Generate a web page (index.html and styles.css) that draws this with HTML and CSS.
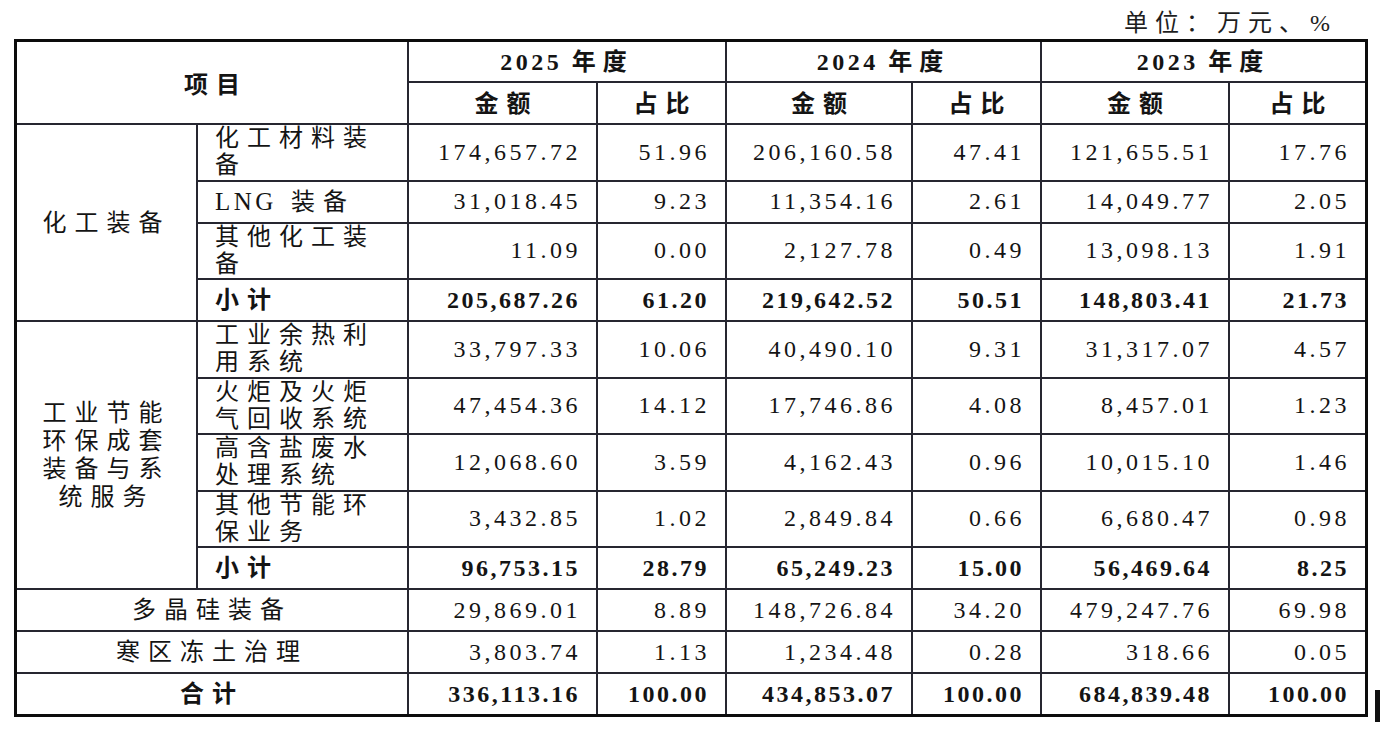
FILE: index.html
```html
<!DOCTYPE html>
<html lang="zh-CN">
<head>
<meta charset="utf-8">
<title>营业收入构成</title>
<link rel="stylesheet" href="styles.css">
</head>
<body>
<div class="page">
  <div class="unit">单位：万元、%</div>
  <table class="tbl">
    <colgroup>
      <col class="w-cat"><col class="w-sub">
      <col class="w-amt1"><col class="w-pct">
      <col class="w-amt2"><col class="w-pct">
      <col class="w-amt3"><col class="w-pct3">
    </colgroup>
    <thead>
      <tr class="h1">
        <th colspan="2" rowspan="2" class="hd">项目</th>
        <th colspan="2" class="yr">2025 <span class="cn">年度</span></th>
        <th colspan="2" class="yr">2024 <span class="cn">年度</span></th>
        <th colspan="2" class="yr">2023 <span class="cn">年度</span></th>
      </tr>
      <tr class="h2">
        <th class="hd up">金额</th><th class="hd up">占比</th>
        <th class="hd up">金额</th><th class="hd up">占比</th>
        <th class="hd up">金额</th><th class="hd up">占比</th>
      </tr>
    </thead>
    <tbody>
      <tr class="two">
        <td rowspan="4" class="cat">化工装备</td>
        <td class="sub">化工材料装<br>备</td>
        <td class="num">174,657.72</td><td class="num">51.96</td>
        <td class="num">206,160.58</td><td class="num">47.41</td>
        <td class="num">121,655.51</td><td class="num">17.76</td>
      </tr>
      <tr class="one">
        <td class="sub"><span class="lat">LNG</span> 装备</td>
        <td class="num">31,018.45</td><td class="num">9.23</td>
        <td class="num">11,354.16</td><td class="num">2.61</td>
        <td class="num">14,049.77</td><td class="num">2.05</td>
      </tr>
      <tr class="two">
        <td class="sub">其他化工装<br>备</td>
        <td class="num">11.09</td><td class="num">0.00</td>
        <td class="num">2,127.78</td><td class="num">0.49</td>
        <td class="num">13,098.13</td><td class="num">1.91</td>
      </tr>
      <tr class="one bold">
        <td class="sub">小计</td>
        <td class="num">205,687.26</td><td class="num">61.20</td>
        <td class="num">219,642.52</td><td class="num">50.51</td>
        <td class="num">148,803.41</td><td class="num">21.73</td>
      </tr>
      <tr class="two">
        <td rowspan="5" class="cat">工业节能<br>环保成套<br>装备与系<br>统服务</td>
        <td class="sub">工业余热利<br>用系统</td>
        <td class="num">33,797.33</td><td class="num">10.06</td>
        <td class="num">40,490.10</td><td class="num">9.31</td>
        <td class="num">31,317.07</td><td class="num">4.57</td>
      </tr>
      <tr class="two">
        <td class="sub">火炬及火炬<br>气回收系统</td>
        <td class="num">47,454.36</td><td class="num">14.12</td>
        <td class="num">17,746.86</td><td class="num">4.08</td>
        <td class="num">8,457.01</td><td class="num">1.23</td>
      </tr>
      <tr class="two">
        <td class="sub">高含盐废水<br>处理系统</td>
        <td class="num">12,068.60</td><td class="num">3.59</td>
        <td class="num">4,162.43</td><td class="num">0.96</td>
        <td class="num">10,015.10</td><td class="num">1.46</td>
      </tr>
      <tr class="two">
        <td class="sub">其他节能环<br>保业务</td>
        <td class="num">3,432.85</td><td class="num">1.02</td>
        <td class="num">2,849.84</td><td class="num">0.66</td>
        <td class="num">6,680.47</td><td class="num">0.98</td>
      </tr>
      <tr class="one bold">
        <td class="sub">小计</td>
        <td class="num">96,753.15</td><td class="num">28.79</td>
        <td class="num">65,249.23</td><td class="num">15.00</td>
        <td class="num">56,469.64</td><td class="num">8.25</td>
      </tr>
      <tr class="one">
        <td colspan="2" class="mid">多晶硅装备</td>
        <td class="num">29,869.01</td><td class="num">8.89</td>
        <td class="num">148,726.84</td><td class="num">34.20</td>
        <td class="num">479,247.76</td><td class="num">69.98</td>
      </tr>
      <tr class="one">
        <td colspan="2" class="mid">寒区冻土治理</td>
        <td class="num">3,803.74</td><td class="num">1.13</td>
        <td class="num">1,234.48</td><td class="num">0.28</td>
        <td class="num">318.66</td><td class="num">0.05</td>
      </tr>
      <tr class="one bold">
        <td colspan="2" class="mid">合计</td>
        <td class="num">336,113.16</td><td class="num">100.00</td>
        <td class="num">434,853.07</td><td class="num">100.00</td>
        <td class="num">684,839.48</td><td class="num">100.00</td>
      </tr>
    </tbody>
  </table>
  <div class="edge-mark"></div>
</div>
</body>
</html>
```

FILE: styles.css
```css
html, body {
  margin: 0;
  padding: 0;
  background: #ffffff;
}

.page {
  position: relative;
  width: 1380px;
  height: 730px;
  font-family: "Liberation Serif", "Noto Sans CJK SC", serif;
  color: #141414;
}

.unit {
  height: 39px;
  box-sizing: border-box;
  padding: 8px 43px 0 0;
  text-align: right;
  font-size: 24px;
  line-height: 30px;
  letter-spacing: 7px;
  color: #1e1e1e;
}

.tbl {
  margin-left: 14px;
  width: 1354px;
  border-collapse: collapse;
  table-layout: fixed;
  border: 3px solid #0c0c0c;
}

.w-cat { width: 181.5px; }
.w-sub { width: 211px; }
.w-amt1 { width: 189px; }
.w-pct { width: 129px; }
.w-amt2 { width: 186px; }
.w-amt3 { width: 188px; }
.w-pct3 { width: 137.5px; }

.tbl th,
.tbl td {
  border: 2px solid #262630;
  padding: 0;
  vertical-align: middle;
  font-size: 24px;
}

.h1 { height: 41.5px; }
.h2 { height: 42px; }
.two { height: 56.5px; }
.one { height: 42px; }

.hd {
  font-weight: 700;
  text-align: center;
  letter-spacing: 8px;
  padding-left: 8px !important;
}

.hd.up {
  padding-bottom: 3px !important;
}

.yr {
  font-weight: 700;
  text-align: center;
  letter-spacing: 3.5px;
  padding-top: 0 !important;
  padding-bottom: 4px !important;
}

.yr .cn {
  letter-spacing: 7px;
}

.cat {
  text-align: center;
  letter-spacing: 8px;
  line-height: 28px;
}

.sub {
  text-align: left;
  padding-left: 17px !important;
  letter-spacing: 8px;
  line-height: 27px;
}

.lat {
  font-size: 25px;
  letter-spacing: 3.5px;
}

.mid {
  text-align: center;
  letter-spacing: 8px;
  padding-bottom: 5px !important;
}

.num {
  text-align: right;
  letter-spacing: 3.5px;
  padding-right: 15px !important;
}

.bold td {
  font-weight: 700;
}

.bold .num {
  letter-spacing: 2.5px;
  padding-right: 16px !important;
}

.edge-mark {
  position: absolute;
  left: 1375px;
  top: 690px;
  width: 5px;
  height: 32px;
  background: #111111;
}
```
